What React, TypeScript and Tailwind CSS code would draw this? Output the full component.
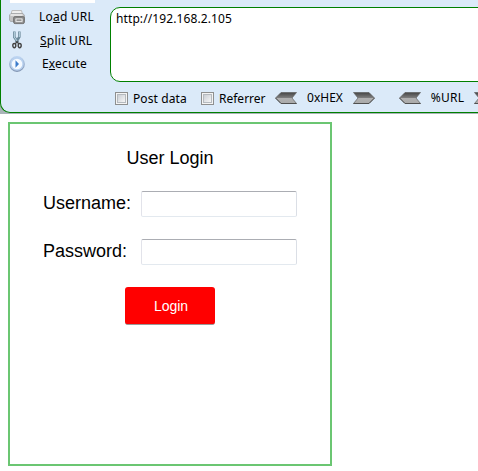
import React from "react";

function PrinterIcon() {
  return (
    <svg width="16" height="16" viewBox="0 0 16 16" className="shrink-0">
      <path d="M3 1.5h9.5l1 4H2z" fill="#eeeeee" stroke="#bdbdbd" />
      <path d="M2 4.5h12l1.5 2V11l-2 1.5h-12L.5 11V6z" fill="#c2c2c2" stroke="#a0a2a4" strokeWidth=".8" />
      <path d="M1.5 6h12" stroke="#eeeeee" strokeWidth="1.5" />
      <rect x="4.6" y="7.6" width="10.8" height="7" rx="1.5" fill="#8e8e8e" stroke="#6d6d6d" strokeWidth=".9" />
      <rect x="6" y="9" width="8" height="4.4" rx="1" fill="#e9e9e9" stroke="#777" strokeWidth=".6" />
      <path d="M7.5 11.2h5" stroke="#777" strokeWidth="1.2" />
    </svg>
  );
}

function ScissorsIcon() {
  return (
    <svg width="10" height="18" viewBox="0 0 10 18" className="shrink-0" fill="none">
      <path d="M2.3.5v5.5L6 11.5M7.3.5v5.5L4 11.5" stroke="#6d8a9b" strokeWidth="2.6" />
      <path d="M2.3 1v5L5 10M7.3 1v5" stroke="#bdd8e6" strokeWidth="1" />
      <ellipse cx="2.3" cy="14.6" rx="1.5" ry="2.1" stroke="#444" strokeWidth="1.4" />
      <ellipse cx="7.7" cy="14.6" rx="1.5" ry="2.1" stroke="#444" strokeWidth="1.4" />
      <path d="M3.3 12.8L5 10.5l1.7 2.3" stroke="#444" strokeWidth="1.3" />
    </svg>
  );
}

function PlayIcon() {
  return (
    <svg width="16" height="16" viewBox="0 0 16 16" className="shrink-0">
      <defs>
        <linearGradient id="ring" x1="0" y1="0" x2="0" y2="1">
          <stop offset="0" stopColor="#bdd5f2" />
          <stop offset="1" stopColor="#8295b3" />
        </linearGradient>
      </defs>
      <circle cx="8" cy="8" r="7.3" fill="#b9d2f0" stroke="url(#ring)" strokeWidth="1.2" />
      <circle cx="8" cy="8" r="5.3" fill="#f4f9ff" />
      <path d="M6.5 4.3L10 8l-3.5 3.7z" fill="#3c7ccb" />
    </svg>
  );
}

function Arrow({ right = false }: { right?: boolean }) {
  return (
    <svg width="22" height="12" viewBox="0 0 22 12" className={right ? "shrink-0 -scale-x-100" : "shrink-0"}>
      <defs>
        <linearGradient id="metal" x1="0" y1="0" x2="0" y2="1">
          <stop offset="0" stopColor="#454545" />
          <stop offset=".5" stopColor="#808080" />
          <stop offset=".52" stopColor="#b0b0b0" />
          <stop offset="1" stopColor="#aaa" />
        </linearGradient>
      </defs>
      <path d="M.5 6L6 .5h15.5L17 6l4.5 5.5H6z" fill="url(#metal)" stroke="#606060" strokeWidth=".7" />
      <path d="M.5 6L6 11.5h15.5" fill="none" stroke="#505050" />
    </svg>
  );
}

function CheckBox() {
  return (
    <span className="block size-[13px] shrink-0 border border-[#8e8f8f] bg-[#f4f4f4] p-px">
      <span className="block size-full border border-[#b5babf] bg-linear-to-br from-[#cbcfd5] to-[#f6f6f6]" />
    </span>
  );
}

function Field({ label, type }: { label: string; type: string }) {
  return (
    <div className="flex h-[26px] items-center">
      <label className="w-[98px] pb-[2px] text-[18px] leading-6">{label}</label>
      <input
        type={type}
        aria-label={label}
        className="h-[26px] w-[156px] rounded-[2px] border border-[#e3e9ef] border-t-[#abadb3] border-l-[#e2e3ea] border-r-[#dbdfe6] bg-white px-1 outline-none"
      />
    </div>
  );
}

export default function App() {
  return (
    <div className="h-[471px] w-[478px] overflow-hidden bg-white text-black">
      <header className="h-[114px] bg-[#a9b4b8] font-['Noto_Sans',sans-serif] text-[12px] leading-4">
        <div className="flex h-[113px] overflow-hidden rounded-bl-[10px] border-b border-l border-[#008000] bg-[#dbeaf9]">
          <nav className="w-[109px] shrink-0 pl-2">
            <div className="ml-px h-[3px] w-[85px] bg-white" />
            <div className="mt-[6px] flex h-4 items-center">
              <PrinterIcon />
              <span className="ml-[14px] tracking-[0.2px]">Lo<u>a</u>d URL</span>
            </div>
            <div className="mt-[6px] flex h-[18px] items-center">
              <span className="flex w-4 justify-center"><ScissorsIcon /></span>
              <span className="ml-[15px] pt-px tracking-[0.25px]"><u>S</u>plit URL</span>
            </div>
            <div className="mt-[7px] flex h-4 items-center">
              <PlayIcon />
              <span className="ml-[17px] tracking-[0.15px]">E<u>x</u>ecute</span>
            </div>
          </nav>
          <div className="w-[368px] shrink-0 pt-[7px]">
            <div className="h-[75px] w-[390px] rounded-[10px] border border-[#008000] bg-white pt-[3px] pl-[5px] tracking-[0.1px]">http://192.168.2.105</div>
            <div className="flex h-8 w-[390px] items-center pl-[5px]">
              <CheckBox />
              <span className="ml-[5px] w-[68px] shrink-0 pt-[2px] tracking-[0.1px]">Post data</span>
              <CheckBox />
              <span className="ml-[5px] w-[56px] shrink-0 pt-[2px]">Referrer</span>
              <Arrow />
              <span className="w-[56px] shrink-0 text-center">0xHEX</span>
              <Arrow right />
              <span className="w-6 shrink-0" />
              <Arrow />
              <span className="w-[53px] shrink-0 text-center tracking-[0.2px]">%URL</span>
              <Arrow right />
            </div>
          </div>
        </div>
      </header>
      <main className="mt-2 ml-2 h-[344px] w-[324px] border-2 border-[#6bc672] font-['Liberation_Sans',Arial,sans-serif]">
        <h1 className="mt-[22px] text-center text-[18px] leading-6">User Login</h1>
        <form className="mt-[21px] flex flex-col gap-[22px] pl-[33px]" onSubmit={(e: React.FormEvent) => e.preventDefault()}>
          <Field label="Username:" type="text" />
          <Field label="Password:" type="password" />
          <button className="ml-[82px] h-[38px] w-[90px] rounded-[3px] border-b border-[#999] bg-[#f00] pt-[2px] pl-[2px] text-[14px] tracking-[-0.1px] text-white">
            Login
          </button>
        </form>
      </main>
    </div>
  );
}
